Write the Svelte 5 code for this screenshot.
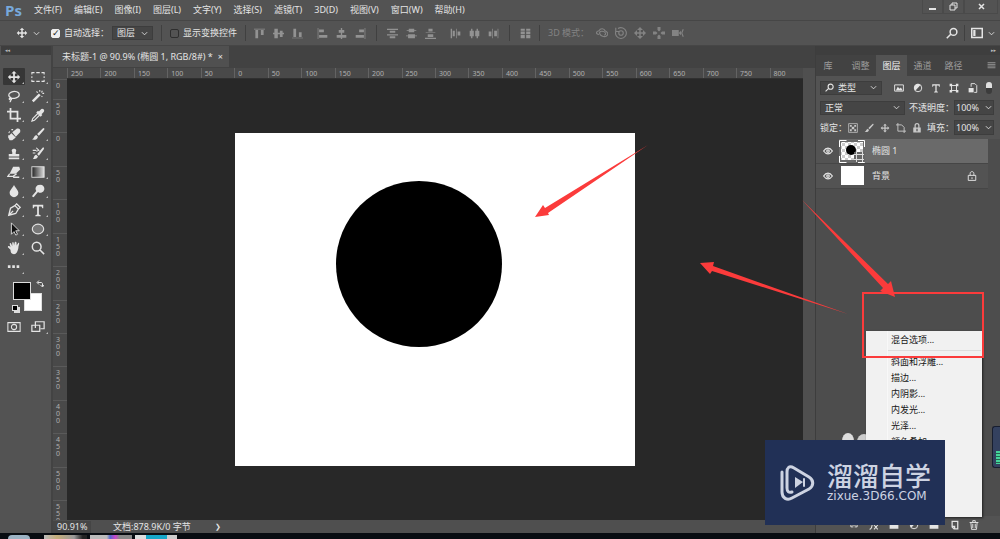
<script lang="ts">
	type Icon = { f?: string; s?: string; w?: number };

	const menus = ['文件(F)', '编辑(E)', '图像(I)', '图层(L)', '文字(Y)', '选择(S)', '滤镜(T)', '3D(D)', '视图(V)', '窗口(W)', '帮助(H)'];
	const moveShape = 'M8 1l3 3H9v3h3V5l3 3-3 3V9H9v3h2l-3 3-3-3h2V9H4v2L1 8l3-3v2h3V4H5z';

	// all icons share a 16x16 box: f is the filled part, s the stroked part
	const icons: Record<string, Icon> = {
		move: { f: moveShape },
		marquee: { s: 'M1 5V3h3M6 3h4M12 3h3v2M15 7v2M15 11v2h-3M10 13H6M4 13H1v-2M1 9V7' },
		lasso: { s: 'M5 10C1 9 1 5 5 3.500S14 3 14 6.500 8 11.500 4 10.500c-2 0-2 2 0 2s1-2 0-2M4.500 12.500c0 1-1 2-1 2.500', w: 1.4 },
		wand: { f: 'M1 13L9 5l2 2-8 8z', s: 'M10 1v2M13 2l-1 2M15 5h-2M13 9l-1-1M6 3l2 1' },
		crop: { s: 'M4 0v12h12M0 4h12v12', w: 2 },
		dropper: { f: 'M9 4l2-2c2-3 6 1 3 3l-2 2 1 1-2 2-5-5 2-2z', s: 'M8 6l-6 6-1 3 3-1 6-6', w: 1.3 },
		heal: { f: 'M1 11l4-4 5 5-4 3H3zM6 6l5-4c3-1 5 1 4 4l-5 5z', s: 'M3 5l-1 2M5 3h2M2 9v1' },
		brush: { f: 'M14 1c1 0 2 1 1 2l-6 7-2-2zM6 9l2 2c-1 4-5 4-7 3 3-1 2-4 5-5z' },
		stamp: { f: 'M6 7c-3-5 7-5 4 0v2h4v3H2V9h4zM2 13h12v2H2z' },
		history: { f: 'M14 1l1 2-6 8-2-2zM6 10l2 2c-1 3-4 3-6 3 2-2 1-4 4-5z', s: 'M2 5h4M2 8h3M6 2l3 3-3 1' },
		eraser: { f: 'M7 2h7l1 3-5 5H3z', s: 'M3 10l-2 3h6l4-3M7 14h7', w: 1.5 },
		drop: { f: 'M8 1c2 4 5 6 5 9a5 5 0 0 1-10 0c0-3 3-5 5-9z' },
		dodge: { f: 'M10 1a4.500 4.500 0 1 1-2 8l-5 6-2-1 5-6a4.500 4.500 0 0 1 4-7z' },
		pen: { s: 'M2 14l2-8 5-3 4 4-3 5zM2 14l5-5M9 3l2-2 4 4-2 2', w: 1.5 },
		type: { f: 'M2 2h12v4h-1l-1-2H9v9l2 1v1H5v-1l2-1V4H4L3 6H2z' },
		hand: { f: 'M4 10L1 7c0-2 2-1 3 0L3 3c1-2 2 0 3 3V2c1-2 2 0 2 3l1-4c2-1 2 1 2 4l2-3c2 0 0 3 0 6-1 4-2 7-5 7s-4-2-4-5z' },
		zoom: { s: 'M6.500 1.500a5 5 0 1 1 0 10 5 5 0 0 1 0-10M10 10l5 5', w: 1.7 },
		search: { s: 'M10 2a4.500 4.500 0 1 1 0 9 4.500 4.500 0 0 1 0-9M7 9l-6 6', w: 2 },
		dots: { f: 'M1 6h3v3H1zM6 6h3v3H6zM11 6h3v3h-3z' },
		mask: { s: 'M1 3h14v10H1zM8 5a3 3 0 1 1 0 6 3 3 0 0 1 0-6' },
		screens: { s: 'M5 9V2h10v8H11M1 6h9v7H1z', w: 1.4 },
		swap: { s: 'M3 5h7c2 0 3 1 3 3v5M6 1L2 5l4 4M9 10l4 4 3-4', w: 2 },
		top: { f: 'M0 1h16v1H0zM2 3h4v12H2zM10 3h4v7h-4z' },
		middle: { f: 'M2 1h5v6h3V4h4v3h2v2h-2v4h-4V9H7v6H2V9H0V7h2z' },
		bottom: { f: 'M0 14h16v1H0zM2 1h4v12H2zM10 6h4v7h-4z' },
		left: { f: 'M1 0h1v16H1zM3 2h7v4H3zM3 10h12v4H3z' },
		center: { f: 'M7 0h2v3h3v4H9v3h6v4H9v2H7v-2H1v-4h6V7H4V3h3z' },
		right: { f: 'M14 0h1v16h-1zM6 2h7v4H6zM1 10h12v4H1z' },
		distTop: { f: 'M0 1h16v2H0zM4 4h8v3H4zM0 9h16v2H0zM4 12h8v3H4z' },
		distMid: { f: 'M4 1h8v2h3v1h-3v2H4V4H1V3h3zM3 9h10v2h3v1h-3v3H3v-3H0v-1h3z' },
		distBottom: { f: 'M5 1h6v4H5zM1 6h14v1H1zM4 9h8v4H4zM0 14h16v2H0z' },
		distLeft: { f: 'M1 1h2v14H1zM4 4h3v8H4zM9 1h1v14H9zM11 5h4v6h-4z' },
		distCenter: { f: 'M3 1h2v3h2v8H5v3H3v-3H1V4h2zM11 1h2v3h2v8h-2v3h-2v-3H9V4h2z' },
		distRight: { f: 'M6 1h1v14H6zM1 5h4v7H1zM14 1h1v14h-1zM9 4h4v8H9z' },
		autoAlign: { f: 'M1 1h6v3H1zM9 1h6v3H9zM1 5h6v4H1zM9 5h6v4H9zM1 10h6v5H1zM9 10h6v5H9z' },
		orbit: { s: 'M4 10C-1 9 0 6 4 5c2-4 7-3 8 0 4 2 5 5 2 7s-8 0-9-3 2-4 5-3 4 4 1 5', w: 1.5 },
		roll: { s: 'M4 2a7.200 7.200 0 1 1-3 4M1 1v5h5M8 5a3 3 0 1 1 0 6 3 3 0 0 1 0-6', w: 1.5 },
		pan: { f: 'M8 0l4 4H9v3h3V4l4 4-4 4V9H9v3h3l-4 4-4-4h3V9H4v3L0 8l4-4v3h3V4H4z' },
		slide: { f: 'M6 0h4v4l-2 2-2-2zM0 6h4l2 2-2 2H0zM16 6h-4l-2 2 2 2h4zM6 16h4v-4l-2-2-2 2z' },
		camera: { f: 'M0 4h9v8H0zM9 8l3-3v6z', s: 'M15 3l-2 5 2 5', w: 1.5 },
		layout: { s: 'M1 2h14v12H1z', f: 'M3 4h3v8H3z', w: 2 },
		image: { s: 'M1 3h14v10H1z', f: 'M3 12l3-6 3 3 2-2 3 5z', w: 1.5 },
		adjust: { s: 'M8 2a6 6 0 1 1 0 12A6 6 0 0 1 8 2', f: 'M12 3a6 6 0 1 0-8 9z', w: 1.5 },
		shape: { s: 'M4 4h8v8H4z', f: 'M1 1h4v4H1zM11 1h4v4h-4zM1 11h4v4H1zM11 11h4v4h-4z', w: 1.5 },
		smart: { s: 'M5 6V1h6l3 3v11h-4', f: 'M1 8h8v7H1z', w: 1.5 },
		checker: { s: 'M1 1h14v14H1z', f: 'M3 3h3v3H3zM10 3h3v3h-3zM6 6h4v4H6zM3 10h3v3H3zM10 10h3v3h-3z' },
		artboard: { s: 'M3 0v13h13M0 3h9l4 4v9', w: 1.5 },
		lock: { s: 'M5 8V4c0-4 6-4 6 0v4', f: 'M2 7h12v8H2zM7 9h2v4H7z', w: 2 },
		lockOutline: { s: 'M5 7V4c0-4 6-4 6 0v3M2 7h12v8H2zM8 10v3', w: 1.5 },
		eye: { s: 'M1 8c4-6 10-6 14 0-4 6-10 6-14 0zM8 6a2 2 0 1 1 0 4 2 2 0 0 1 0-4', w: 2 },
		link: { s: 'M7 5H3v6h4M9 5h4v6H9M5 8h6', w: 1.5 },
		fx: { s: 'M1 15c3 0 3-2 4-7s2-7 5-6M3 7h6M8 8l6 7M14 8l-6 7', w: 1.7 },
		folder: { f: 'M1 3h5l2 2h7v9H1z' },
		page: { s: 'M5 2h9v12H8L5 11zM5 10h4v4', w: 2 },
		trash: { s: 'M1 4h14M6 4V1h4v3M3 4l1 11h8l1-11M6 6v7M10 6v7', w: 1.5 },
		down: { s: 'M2 5l6 6 6-6', w: 2 },
		menu: { s: 'M1 3h14M1 6h14M1 9h14M1 12h14', w: 1.5 }
	};

	const tools = [
		'move', 'marquee', 'lasso', 'wand', 'crop', 'dropper', 'heal', 'brush', 'stamp', 'history',
		'eraser', 'gradient', 'drop', 'dodge', 'pen', 'type', 'select', 'ellipse', 'hand', 'zoom', 'dots'
	];
	const alignGroups = [
		['top', 'middle', 'bottom'],
		['left', 'center', 'right']
	];
	const distGroups = [
		['distTop', 'distMid', 'distBottom'],
		['distLeft', 'distCenter', 'distRight']
	];
	const rulerX = [250, 200, 150, 100, 50, ...Array.from({ length: 17 }, (_, i) => i * 50)];
	const rulerY = ['0', '50', ...Array.from({ length: 12 }, (_, i) => String(i * 50))];
	const effects = ['斜面和浮雕...', '描边...', '内阴影...', '内发光...', '光泽...', '颜色叠加...'];
	const panelTabs = ['库', '调整', '图层', '通道', '路径'];

	let tool = $state('move');
	let panel = $state('图层');
	let layer = $state('椭圆 1');
	let autoSelect = $state(true);
	let showTransform = $state(false);
</script>

{#snippet icon(name: string, size = 12)}
	<svg class="icon" width={size} height={size} viewBox="0 0 16 16" aria-hidden="true">
		{#if name === 'gradient'}
			<defs>
				<linearGradient id="ramp"><stop stop-color="#222" /><stop offset="1" stop-color="#ddd" /></linearGradient>
			</defs>
			<rect x="1" y="2" width="14" height="12" fill="url(#ramp)" stroke="currentColor" />
		{:else if name === 'select'}
			<path d="M5 1v13l3-3 2 4 2-1-2-4h4z" fill="#111" stroke="currentColor" />
		{:else if name === 'ellipse'}
			<ellipse cx="8" cy="8" rx="6.5" ry="5.5" fill="#777" stroke="currentColor" stroke-width="1.3" />
		{:else}
			{#if icons[name].f}<path d={icons[name].f} fill="currentColor" fill-rule="evenodd" />{/if}
			{#if icons[name].s}<path d={icons[name].s} fill="none" stroke="currentColor" stroke-width={icons[name].w ?? 1.2} />{/if}
		{/if}
	</svg>
{/snippet}

<div class="app">
	<header class="menubar">
		<b class="logo">Ps</b>
		<nav>
			{#each menus as item}
				<button>{item}</button>
			{/each}
		</nav>
		<div class="window-buttons">
			<button aria-label="最小化"><svg width="9" height="9" viewBox="0 0 9 9"><path d="M1 7h7" stroke="currentColor" stroke-width="2" /></svg></button>
			<button aria-label="还原"><svg width="9" height="9" viewBox="0 0 9 9"><path d="M3 3V1h5v5H6M1 3h5v5H1z" fill="none" stroke="currentColor" /></svg></button>
			<button class="close" aria-label="关闭"><svg width="9" height="9" viewBox="0 0 9 9"><path d="M2 2l5 5M7 2L2 7" stroke="currentColor" stroke-width="1.5" /></svg></button>
		</div>
	</header>

	<div class="options">
		<span class="current-tool">{@render icon('move')}{@render icon('down', 7)}</span>
		<label class="check"><input type="checkbox" bind:checked={autoSelect} />自动选择：</label>
		<span class="dropdown target"><select aria-label="自动选择"><option>图层</option><option>组</option></select>{@render icon('down', 7)}</span>
		<i class="sep"></i>
		<label class="check"><input type="checkbox" bind:checked={showTransform} />显示变换控件</label>
		<i class="sep"></i>
		<div class="icon-groups">
			{#each alignGroups as group}
				<div class="icon-group">{#each group as name}<button aria-label={name}>{@render icon(name, 11)}</button>{/each}</div>
			{/each}
		</div>
		<i class="sep wide"></i>
		<div class="icon-groups">
			{#each distGroups as group}
				<div class="icon-group">{#each group as name}<button aria-label={name}>{@render icon(name, 11)}</button>{/each}</div>
			{/each}
		</div>
		<i class="sep wide"></i>
		<button class="dim" aria-label="自动对齐">{@render icon('autoAlign', 11)}</button>
		<i class="sep"></i>
		<div class="icon-group mode">
			<span>3D 模式：</span>
			{#each ['orbit', 'roll', 'pan', 'slide', 'camera'] as name}
				<button aria-label={name}>{@render icon(name)}</button>
			{/each}
		</div>
		<div class="options-end">
			<button aria-label="搜索">{@render icon('search')}</button>
			<i class="sep"></i>
			<button aria-label="工作区">{@render icon('layout')}{@render icon('down', 7)}</button>
		</div>
	</div>

	<div class="workspace">
		<aside class="tools">
			<div class="collapse">◂◂</div>
			<div class="tool-grid">
				{#each tools as name}
					<button class="tool" class:active={tool === name} class:plain={name === 'zoom'} aria-label={name} onclick={() => (tool = name)}>
						{@render icon(name, 14)}
					</button>
				{/each}
			</div>
			<div class="swatches">
				<span class="back"></span>
				<span class="front"></span>
				<span class="swap">{@render icon('swap', 8)}</span>
				<span class="reset"></span>
			</div>
			<div class="tool-grid">
				<button class="tool plain" aria-label="快速蒙版">{@render icon('mask', 14)}</button>
				<button class="tool" aria-label="屏幕模式">{@render icon('screens', 14)}</button>
			</div>
		</aside>

		<main>
			<div class="doc-tabs">
				<div class="doc-tab">未标题-1 @ 90.9% (椭圆 1, RGB/8#) *<button aria-label="关闭文档">×</button></div>
			</div>
			<div class="doc-body">
				<div class="ruler-corner"></div>
				<div class="ruler-x">
					{#each rulerX as n}<span>{n}</span>{/each}
				</div>
				<div class="scroll-y"></div>
				<div class="ruler-y">
					{#each rulerY as n}
						<span>{#each n.split('') as d}<i>{d}</i>{/each}</span>
					{/each}
				</div>
				<div class="canvas">
					<svg class="artboard" width="400" height="333" viewBox="0 0 400 333">
						<rect width="400" height="333" fill="#fff" />
						<circle cx="184" cy="131" r="83" fill="#000" />
					</svg>
				</div>
			</div>
			<footer class="status">
				<span class="zoom-level">90.91%</span>
				<span class="doc-size">文档:878.9K/0 字节</span>
				<span class="arrow">❯</span>
			</footer>
		</main>

		<aside class="panel">
			<div class="collapse end">▸▸</div>
			<div class="panel-tabs">
				{#each panelTabs as tab}
					<button class:active={panel === tab} onclick={() => (panel = tab)}>{tab}</button>
				{/each}
				<span class="panel-menu">{@render icon('menu', 9)}</span>
			</div>
			<div class="controls">
				<div class="row filters">
					<span class="dropdown kind">{@render icon('search', 9)}<select aria-label="类型"><option>类型</option></select>{@render icon('down', 7)}</span>
					{#each ['image', 'adjust', 'type', 'shape', 'smart'] as name}
						<button aria-label={name}>{@render icon(name, 10)}</button>
					{/each}
					<span class="toggle"></span>
				</div>
				<div class="row">
					<span class="dropdown blend"><select aria-label="混合模式"><option>正常</option></select>{@render icon('down', 7)}</span>
					<label for="opacity">不透明度：</label>
					<span class="amount"><input id="opacity" value="100%" />{@render icon('down', 7)}</span>
				</div>
				<div class="row locks">
					<span>锁定：</span>
					<span class="lock-icons">
						{#each ['checker', 'brush', 'move', 'artboard', 'lock'] as name}
							<button aria-label={name}>{@render icon(name, 10)}</button>
						{/each}
					</span>
					<label for="fill">填充：</label>
					<span class="amount"><input id="fill" value="100%" />{@render icon('down', 7)}</span>
				</div>
			</div>
			<div class="layers">
				{#each ['椭圆 1', '背景'] as name}
					<div class="layer" class:active={layer === name}>
						<span class="eye">{@render icon('eye', 10)}</span>
						<button class="layer-body" onclick={() => (layer = name)}>
							{#if name === '背景'}
								<svg width="26" height="20" viewBox="0 0 26 20"><rect x="2" width="23" height="19" fill="#fff" /></svg>
							{:else}
								<svg width="26" height="23" viewBox="0 0 26 23">
									<defs>
										<pattern id="cells" width="6" height="6" patternUnits="userSpaceOnUse">
											<path d="M0 0h6v6H0z" fill="#fff" /><path d="M0 0h3v3H0zM3 3h3v3H3z" fill="#ccc" />
										</pattern>
									</defs>
									<rect x="2" y="2" width="22" height="18" fill="url(#cells)" />
									<circle cx="12" cy="10" r="5" />
									<path d="M.5 7V.5h7M19 .5h6.500V7M.5 16v6.500h7M19 22.500h6.500V16" fill="none" stroke="#fff" />
									<path d="M15 12h11v10H15z" fill="#666" />
									<path d="M17.500 14.500h6v5h-6zM15 14.500h10M15 19.500h10M17.500 12v10M23.500 12v10" fill="none" stroke="#ddd" />
								</svg>
							{/if}
							<span>{name}</span>
							{#if name === '背景'}<span class="locked">{@render icon('lockOutline', 10)}</span>{/if}
						</button>
					</div>
				{/each}
			</div>
			<footer class="panel-footer">
				{#each ['link', 'fx', 'folder', 'adjust', 'folder', 'page', 'trash'] as name}
					<button aria-label={name}>{@render icon(name, 10)}</button>
				{/each}
			</footer>
		</aside>
	</div>

	<div class="taskbar">
		<span class="orb"></span>
		<span class="task files"></span>
		<span class="task browser"></span>
		<span class="task editor"></span>
	</div>

	<div class="gadget"><i></i></div>
	<svg class="mascot" width="32" height="14" viewBox="0 0 32 14"><ellipse cx="7" cy="9" rx="6" ry="8" fill="#ddd" /><ellipse cx="23" cy="10" rx="7" ry="8" fill="#ccc" /></svg>

	<div class="fx-menu" role="menu">
		<button role="menuitem">混合选项...</button>
		<hr />
		{#each effects as item}
			<button role="menuitem">{item}</button>
		{/each}
	</div>

	<svg class="marks" viewBox="0 0 1000 539">
		<g fill="#fb3b3b">
			<path d="M648 145L548 213l1 2-14 2 8-12 2 3z" />
			<path d="M848 314l-136-43-2 3-10-11 14-1-1 4z" />
			<path d="M802 200l86 84 3-3 4 16-15-6 3-3z" />
		</g>
		<rect x="863" y="293" width="120" height="64" fill="none" stroke="#fb3b3b" stroke-width="2" />
	</svg>

	<div class="watermark">
		<svg width="36" height="38" viewBox="0 0 36 38" fill="none" stroke="#cdd3e2" stroke-width="3" stroke-linecap="round">
			<path d="M2 8v20c0 6 5 9 10 6l17-9c5-3 5-9 0-12L14 4C9 1 7 4 7 8v16c0 4 2 5 5 4" />
			<path d="M15 13l8 5-8 6z" fill="#cdd3e2" stroke="none" />
			<path d="M24 15v7" stroke-width="2" />
		</svg>
		<div>
			<strong>溜溜自学</strong>
			<small>zixue.3D66.COM</small>
		</div>
	</div>
</div>

<style>
	:global(body) {
		background: #535353;
	}

	.app {
		position: relative;
		display: flex;
		flex-direction: column;
		min-height: 100vh;
		overflow: hidden;
		background: #535353;
		color: #e4e4e4;
		font: 9px/12px 'Noto Sans', 'Noto Sans CJK SC', sans-serif;
	}

	button,
	select,
	input {
		margin: 0;
		padding: 0;
		border: 0;
		background: none;
		color: inherit;
		font: inherit;
	}

	button {
		display: flex;
		align-items: center;
		justify-content: center;
	}

	.icon {
		display: block;
		flex: none;
	}

	.menubar {
		display: flex;
		align-items: center;
		height: 20px;
		border-bottom: 1px solid #464646;
	}

	.logo {
		width: 29px;
		padding-left: 5px;
		color: #77a9dc;
		font: bold 15px/20px 'Open Sans', sans-serif;
	}

	nav {
		display: flex;
		gap: 12px;
		flex: 1;
	}

	.window-buttons {
		display: flex;
		align-self: flex-start;
		margin-right: 2px;
	}

	.window-buttons button {
		width: 21px;
		height: 14px;
		border: 1px solid #4a4a4a;
		border-top: 0;
		box-sizing: border-box;
	}

	.window-buttons .close {
		width: 34px;
	}

	.options {
		display: flex;
		align-items: center;
		height: 24px;
		border-bottom: 1px solid #464646;
	}

	.current-tool {
		display: flex;
		align-items: center;
		gap: 5px;
		width: 35px;
		padding-left: 16px;
	}

	.check {
		display: flex;
		align-items: center;
		gap: 4px;
	}

	.check input {
		appearance: none;
		width: 9px;
		height: 9px;
		border: 1px solid #2e2e2e;
		border-radius: 2px;
		box-sizing: border-box;
	}

	.check input:checked {
		border-color: #eee;
		background: #eee;
	}

	.check input:checked::before {
		content: '✓';
		display: block;
		color: #222;
		font: bold 9px/7px 'DejaVu Sans', sans-serif;
	}

	.dropdown {
		display: flex;
		align-items: center;
		gap: 4px;
		height: 14px;
		padding: 0 4px;
		border: 1px solid #3d3d3d;
		box-sizing: border-box;
		background: #454545;
	}

	.dropdown select {
		appearance: none;
		flex: 1;
		min-width: 0;
	}

	.target {
		width: 41px;
		margin-left: 3px;
	}

	.sep {
		width: 1px;
		height: 16px;
		margin: 0 8px;
		background: #404040;
	}

	.sep.wide {
		margin: 0 10px;
	}

	.icon-groups {
		display: flex;
		gap: 14px;
	}

	.icon-group {
		display: flex;
		gap: 8px;
	}

	.icon-groups,
	.dim {
		color: #929292;
	}

	.mode {
		gap: 7px;
		color: #838383;
	}

	.options-end {
		display: flex;
		align-items: center;
		margin-left: auto;
		padding-right: 5px;
	}

	.options-end .sep {
		margin: 0 6px;
	}

	.options-end button {
		gap: 5px;
	}

	.workspace {
		display: flex;
		flex: 1;
	}

	.collapse {
		height: 9px;
		padding-left: 4px;
		background: #3e3e3e;
		color: #bbb;
		font: 5px/9px 'DejaVu Sans', sans-serif;
	}

	.collapse.end {
		padding-right: 4px;
		text-align: right;
	}

	.tools {
		width: 50px;
		padding-left: 1px;
		border-right: 2px solid #434343;
	}

	.tool-grid {
		display: grid;
		grid-template-columns: 24px 24px;
		grid-auto-rows: 19px;
		margin-left: 1px;
	}

	.collapse + .tool-grid {
		margin-top: 12px;
	}

	.tool {
		position: relative;
		margin: 1px;
		border-radius: 1px;
	}

	.tool.active {
		background: #363636;
	}

	.tool::after {
		content: '';
		position: absolute;
		right: 1px;
		bottom: 1px;
		border: 1px solid #bbb;
		border-top-color: transparent;
		border-left-color: transparent;
	}

	.tool.plain::after {
		display: none;
	}

	.swatches {
		position: relative;
		height: 41px;
	}

	.front,
	.back,
	.swap,
	.reset {
		position: absolute;
	}

	.front,
	.back {
		width: 16px;
		height: 16px;
		border: 1px solid #ddd;
	}

	.front {
		left: 12px;
		top: 6px;
		background: #000;
	}

	.back {
		left: 23px;
		top: 17px;
		background: #fff;
	}

	.swap {
		left: 35px;
		top: 4px;
	}

	.reset {
		left: 11px;
		top: 29px;
		width: 4px;
		height: 4px;
		border: 1px solid #ddd;
		background: #000;
		box-shadow: 2px 2px #ddd;
	}

	main {
		display: flex;
		flex-direction: column;
		flex: 1;
		min-width: 0;
	}

	.doc-tabs {
		display: flex;
		height: 22px;
		background: #424242;
	}

	.doc-tab {
		display: flex;
		align-items: center;
		gap: 5px;
		height: 21px;
		padding: 0 6px 0 9px;
		background: #505050;
	}

	.doc-body {
		display: grid;
		grid-template: 11px 1fr / 14px 1fr 12px;
		flex: 1;
	}

	.ruler-corner,
	.ruler-x,
	.ruler-y {
		background: #494949;
		color: #b0b0b0;
		font: 7px/9px 'Noto Sans', sans-serif;
	}

	.ruler-x {
		display: grid;
		grid-template-columns: repeat(22, 1fr);
		border-bottom: 1px solid #303030;
	}

	.ruler-x span {
		padding: 1px 0 0 3px;
		border-left: 1px solid #636363;
	}

	.ruler-y {
		display: grid;
		grid-area: 2 / 1;
		grid-template-rows: 20px repeat(12, 1fr) 20px;
		line-height: 7px;
	}

	.ruler-y span {
		min-height: 0;
		overflow: hidden;
		padding: 2px 0 0 3px;
		border-top: 1px solid #5a5a5a;
		box-sizing: border-box;
	}

	.ruler-y i {
		display: block;
		font-style: normal;
	}

	.scroll-y {
		grid-area: 1 / 3 / 3 / 4;
		background: #4f4f4f;
	}

	.canvas {
		display: flex;
		align-items: center;
		justify-content: center;
		background: #282828;
	}

	.artboard {
		flex: none;
	}

	.status {
		display: flex;
		align-items: center;
		height: 13px;
		background: #4f4f4f;
	}

	.zoom-level,
	.doc-size {
		padding-left: 4px;
	}

	.zoom-level {
		width: 34px;
		background: #454545;
	}

	.doc-size {
		width: 102px;
		padding-left: 22px;
	}

	.arrow {
		font: 7px/12px 'DejaVu Sans', sans-serif;
	}

	.panel {
		display: flex;
		flex-direction: column;
		width: 184px;
		border-left: 1px solid #3d3d3d;
		background: #4d4d4d;
	}

	.panel-tabs {
		display: flex;
		height: 21px;
		background: #424242;
		color: #9c9c9c;
	}

	.panel-tabs button {
		width: 31px;
	}

	.panel-tabs button:first-child {
		width: 29px;
		padding-right: 5px;
		box-sizing: border-box;
	}

	.panel-tabs .active {
		background: #535353;
		color: #f4f4f4;
	}

	.panel-menu {
		margin: 6px 4px 0 auto;
	}

	.controls {
		display: grid;
		gap: 5px;
		padding: 4px 6px 4px 4px;
		background: #535353;
	}

	.row {
		display: flex;
		align-items: center;
		height: 15px;
	}

	.row label {
		margin-left: auto;
	}

	.filters {
		justify-content: space-between;
		padding-right: 2px;
	}

	.kind {
		width: 62px;
		margin-right: 4px;
	}

	.blend {
		width: 85px;
	}

	.toggle {
		width: 6px;
		height: 12px;
		border-radius: 3px;
		background: linear-gradient(#e0e0e0 50%, #3c3c3c 50%);
	}

	.amount {
		display: flex;
		align-items: center;
		gap: 3px;
		width: 36px;
		height: 13px;
		padding: 0 1px;
		border: 1px solid #3d3d3d;
		background: #454545;
	}

	.amount input {
		flex: 1;
		min-width: 0;
	}

	.lock-icons {
		display: flex;
		gap: 6px;
		margin-left: 1px;
		color: #c8c8c8;
	}

	.layers {
		flex: 1;
		padding-right: 12px;
	}

	.layer {
		display: flex;
		height: 25px;
		border-bottom: 1px solid #464646;
		box-sizing: border-box;
		background: #535353;
	}

	.eye {
		display: grid;
		place-items: center;
		width: 23px;
	}

	.layer-body {
		flex: 1;
		justify-content: flex-start;
		gap: 7px;
	}

	.layer.active .layer-body {
		background: #6a6a6a;
	}

	.locked {
		margin: 0 11px 0 auto;
	}

	.panel-footer {
		display: flex;
		align-items: center;
		justify-content: flex-end;
		gap: 10px;
		height: 17px;
		padding-right: 21px;
		background: #535353;
	}

	.taskbar {
		display: flex;
		align-items: flex-end;
		gap: 3px;
		height: 6px;
		background: #080c11;
	}

	.orb {
		width: 22px;
		height: 4px;
		margin: 0 11px 0 8px;
		border-radius: 11px 11px 0 0;
		background: #9cb3c4;
	}

	.task {
		width: 42px;
		height: 4px;
		background: linear-gradient(90deg, #ccc, #888);
	}

	.files {
		width: 43px;
		background: linear-gradient(90deg, #bbb, #c4ad79 30%, #999 70%, #222 90%);
	}

	.browser {
		background: linear-gradient(90deg, #bbb 40%, #56c 48%, #c4c 60%, #888 70%);
	}

	.editor {
		background: linear-gradient(90deg, #ddd 25%, #16a6c8 25%, #16a6c8 75%, #ccc 75%);
	}

	.fx-menu {
		position: absolute;
		right: 18px;
		bottom: 22px;
		width: 116px;
		height: 186px;
		padding-top: 1px;
		overflow: hidden;
		box-sizing: border-box;
		background: linear-gradient(90deg, #f1f1f1 20px, #e1e1e1 20px, #fff 21px, #f1f1f1 22px);
		box-shadow: 1px 1px 2px #222;
		color: #161616;
	}

	.fx-menu button {
		justify-content: flex-start;
		width: 100%;
		height: 16px;
		padding-left: 25px;
	}

	.fx-menu hr {
		height: 1px;
		margin: 2px 1px 3px 22px;
		border: 0;
		background: #ddd;
	}

	.marks {
		position: absolute;
		inset: 0;
		width: 100%;
		height: 100%;
		pointer-events: none;
	}

	.mascot {
		position: absolute;
		right: 127px;
		bottom: 93px;
	}

	.gadget {
		position: absolute;
		right: 0;
		bottom: 71px;
		width: 7px;
		height: 40px;
		border: 1px solid #171e30;
		border-right: 0;
		border-radius: 3px 0 0 3px;
		background: #34415f;
	}

	.gadget i {
		position: absolute;
		right: 0;
		bottom: 3px;
		width: 4px;
		height: 13px;
		background: repeating-linear-gradient(#45d49b 0 2px, #23644f 2px 3px);
	}

	.watermark {
		position: absolute;
		right: 55px;
		bottom: 14px;
		display: flex;
		align-items: center;
		gap: 11px;
		width: 165px;
		height: 85px;
		padding-left: 15px;
		background: #213056;
		color: #cdd3e2;
	}

	.watermark strong,
	.watermark small {
		display: block;
	}

	.watermark strong {
		font: 500 26px/26px 'Noto Sans CJK SC', sans-serif;
	}

	.watermark small {
		font: 12px/16px 'DejaVu Sans', sans-serif;
	}
</style>
